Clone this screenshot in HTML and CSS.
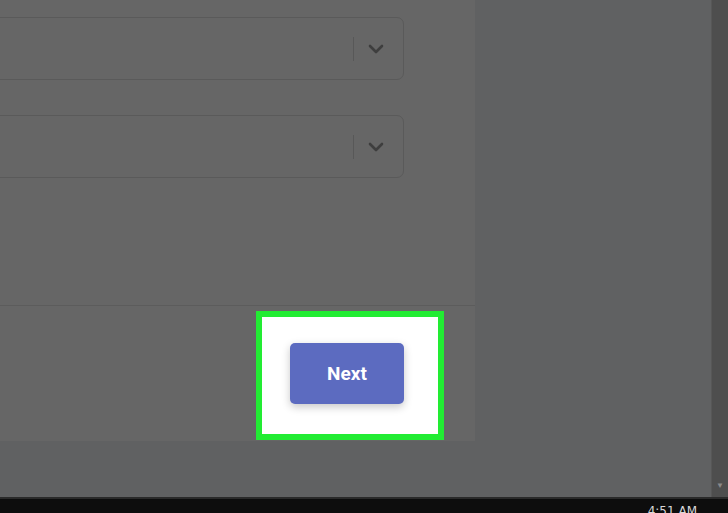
FILE: index.html
```html
<!DOCTYPE html>
<html lang="en">
<head>
    <meta charset="UTF-8">
    <meta name="viewport" content="width=device-width, initial-scale=1.0">
    <title>Next</title>
    <link rel="stylesheet" href="styles.css">
</head>
<body>
    <div class="screen">
        <div class="main">
            <div class="content">
                <div class="dialog">
                    <div class="fields">
                        <div class="select">
                            <span class="divider"></span>
                            <svg class="chevron" width="16" height="10" viewBox="0 0 16 10">
                                <path d="M2 2 L8 8 L14 2" fill="none" stroke="#3e3e3e" stroke-width="2.6" stroke-linecap="round" stroke-linejoin="round"/>
                            </svg>
                        </div>
                        <div class="select">
                            <span class="divider"></span>
                            <svg class="chevron" width="16" height="10" viewBox="0 0 16 10">
                                <path d="M2 2 L8 8 L14 2" fill="none" stroke="#3e3e3e" stroke-width="2.6" stroke-linecap="round" stroke-linejoin="round"/>
                            </svg>
                        </div>
                    </div>
                    <div class="footer">
                        <div class="highlight">
                            <button class="next">Next</button>
                        </div>
                    </div>
                </div>
            </div>
            <div class="scrollbar">
                <span class="arrow">&#9660;</span>
            </div>
        </div>
        <div class="taskbar">
            <span class="clock">4:51 AM</span>
        </div>
    </div>
</body>
</html>
```

FILE: styles.css
```css
body {
    margin: 0;
    background-color: #606162;
    font-family: Roboto, "Liberation Sans", sans-serif;
    overflow: hidden;
}
.screen {
    width: 728px;
    height: 513px;
    display: flex;
    flex-direction: column;
}
.main {
    height: 497px;
    display: flex;
}
.content {
    flex: 1;
}
.dialog {
    width: 475px;
    height: 441px;
    background-color: #666666;
    display: flex;
    flex-direction: column;
}
.fields {
    height: 305px;
    padding-top: 17px;
    box-sizing: border-box;
    display: flex;
    flex-direction: column;
    gap: 35px;
}
.select {
    width: 424px;
    height: 63px;
    margin-left: -20px;
    box-sizing: border-box;
    border: 1px solid #5a5a5a;
    border-radius: 7px;
    display: flex;
    justify-content: flex-end;
    align-items: center;
}
.divider {
    width: 1px;
    height: 24px;
    background-color: #585858;
}
.chevron {
    margin: 0 19px 0 14px;
}
.footer {
    flex: 1;
    border-top: 1px solid #5c5c5c;
    padding: 5px 0 0 256px;
}
.highlight {
    width: 188px;
    height: 129px;
    box-sizing: border-box;
    border: 6px solid #22ec33;
    background-color: white;
    padding: 26px 0 0 28px;
}
.next {
    width: 114px;
    height: 61px;
    border: none;
    border-radius: 5px;
    background-color: #5c6bc0;
    color: white;
    font-family: Roboto, "Liberation Sans", sans-serif;
    font-size: 19px;
    font-weight: bold;
    box-shadow: 0 3px 8px rgba(0, 0, 0, 0.22);
}
.scrollbar {
    width: 16px;
    background-color: #4e4e4e;
    border-left: 1px solid #575757;
    display: flex;
    flex-direction: column;
    justify-content: flex-end;
    align-items: center;
}
.arrow {
    color: #8a8a8a;
    font-size: 8px;
    margin-bottom: 7px;
}
.taskbar {
    flex: 1;
    background-color: #0d0d0d;
    border-top: 2px solid #2a2a2a;
    overflow: hidden;
    display: flex;
    justify-content: flex-end;
}
.clock {
    color: #d8d8d8;
    font-family: "Segoe UI", "DejaVu Sans", sans-serif;
    font-size: 12px;
    margin: 5px 31px 0 0;
}
```
